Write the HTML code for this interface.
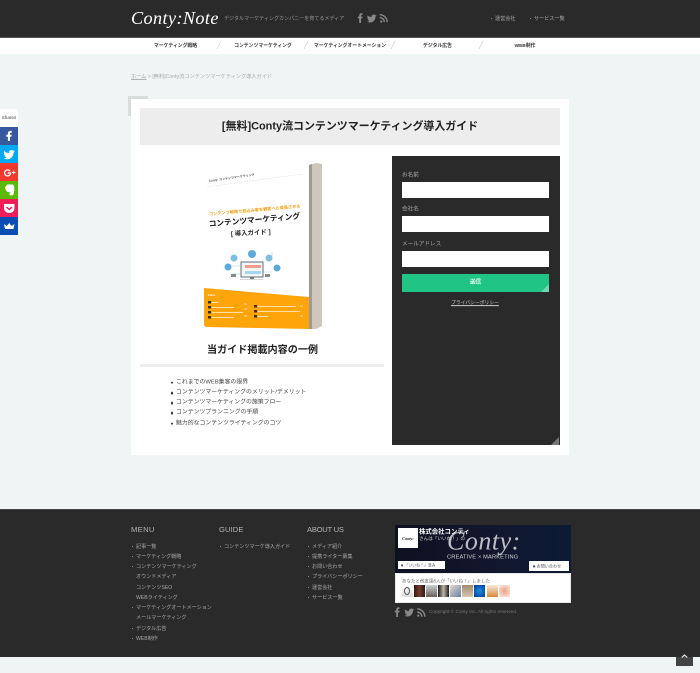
<!DOCTYPE html>
<html lang="ja"><head><meta charset="utf-8"><title>Conty:Note</title>
<style>
html,body{margin:0;padding:0}
body{width:700px;height:673px;position:relative;overflow:hidden;background:#eff4f5;font-family:"Liberation Sans","Noto Sans CJK JP",sans-serif;color:#444}
#w{position:absolute;left:0;top:0;width:700px;height:673px;overflow:hidden;filter:blur(.3px)}
.a{position:absolute;white-space:nowrap}
.t{position:absolute;white-space:nowrap;line-height:1;transform:translateY(calc(-50% + 1.5px))}
.c{position:absolute;white-space:nowrap;line-height:1;transform:translate(-50%,calc(-50% + 1.5px));font-weight:700;color:#333;font-size:4.85px}
.f{position:absolute;white-space:nowrap;line-height:1;transform:translateY(calc(-50% + 1.5px));font-size:5.1px;color:#aaa}
.h{position:absolute;line-height:1;font-size:7.6px;color:#b5b5b5;transform:translateY(-50%);white-space:nowrap}
.d{position:absolute;width:1.4px;height:1.4px;border-radius:50%;background:#aaa}
.b{position:absolute;left:0;width:18px;height:18px}
.b svg{position:absolute;left:0;top:0}
.li{position:absolute;left:176px;font-size:5.88px;line-height:1;color:#444;white-space:nowrap;transform:translateY(calc(-50% + 1.5px))}
.li:before{content:"";position:absolute;left:-5px;top:1.2px;width:2.4px;height:2.4px;border-radius:50%;background:#333}
.lb{position:absolute;left:402px;font-size:5.6px;line-height:1;color:#aaa;transform:translateY(calc(-50% + 1.5px));white-space:nowrap}
.in{position:absolute;left:402px;width:147px;height:16px;background:#fff}
.av{position:absolute;top:585px;width:11px;height:12px}
</style></head><body><div id="w">

<!-- header -->
<div class="a" style="left:0;top:0;width:700px;height:37px;background:#2a2a2a;border-bottom:1px solid #555"></div>
<div class="t" style="left:131px;top:17px;font:italic 400 18.2px 'Liberation Serif','Noto Sans CJK JP',serif;color:#fff;letter-spacing:.4px">Conty:Note</div>
<div class="t" style="left:224px;top:18px;font-size:5.05px;color:#999">デジタルマーケティングカンパニーを育てるメディア</div>
<svg class="a" style="left:355px;top:12px" width="35" height="12" viewBox="0 0 35 12" fill="#888">
<path d="M4.2 11V6.4H2.8V4.6h1.4V3.4C4.2 2 5 1.2 6.3 1.2h1.2V3H6.6c-.5 0-.6.2-.6.6v1h1.5l-.2 1.8H6V11z"/>
<path d="M12 3.4c1.6 1 3 1.6 4.6 1.7-.3-1.5.8-2.6 2-2.6.6 0 1.1.2 1.5.6.5-.1.9-.3 1.3-.5-.2.5-.5.9-1 1.2.4 0 .8-.2 1.2-.3-.3.4-.7.8-1.1 1.1 0 3.2-2.3 5.9-5.5 5.9-1.2 0-2.2-.3-3-.9 1 .1 1.9-.2 2.6-.8-.8 0-1.4-.5-1.7-1.2h.8c-.8-.3-1.4-1-1.4-1.9.3.1.5.2.8.2-.8-.6-1-1.6-.6-2.5z"/>
<circle cx="26.3" cy="9.6" r="1.1"/>
<path d="M25.2 5.4v1.4c2.2 0 4 1.8 4 4h1.4c0-3-2.4-5.4-5.4-5.4zM25.2 2.4v1.4c3.9 0 7 3.1 7 7h1.4c0-4.6-3.8-8.4-8.4-8.4z" transform="translate(0 -.4) scale(.98)"/>
</svg>
<div class="d" style="left:491px;top:18px"></div>
<div class="t" style="left:495px;top:18px;font-size:5.1px;color:#aaa">運営会社</div>
<div class="d" style="left:530px;top:18px"></div>
<div class="t" style="left:534px;top:18px;font-size:5.1px;color:#aaa">サービス一覧</div>

<!-- nav -->
<div class="a" style="left:0;top:38px;width:700px;height:15.5px;background:#fff"></div>
<div class="c" style="left:175.5px;top:45.5px">マーケティング戦略</div>
<div class="c" style="left:263px;top:45.5px">コンテンツマーケティング</div>
<div class="c" style="left:350px;top:45.5px">マーケティングオートメーション</div>
<div class="c" style="left:437.5px;top:45.5px">デジタル広告</div>
<div class="c" style="left:525px;top:45.5px">WEB制作</div>
<svg class="a" style="left:0;top:38px" width="700" height="16" fill="none" stroke="#ccc" stroke-width=".6">
<path d="M217 11 221 3M304 11 308 3M391 11 395 3M479 11 483 3"/>
</svg>

<!-- breadcrumb -->
<div class="t" style="left:131px;top:75.5px;font-size:5.2px;color:#aaa"><span style="text-decoration:underline">ホーム</span> &gt; [無料]Conty流コンテンツマーケティング導入ガイド</div>

<!-- card -->
<div class="a" style="left:128px;top:96px;width:20px;height:20px;background:#d9dcdd"></div>
<div class="a" style="left:131px;top:99px;width:438px;height:356px;background:#fff"></div>
<div class="a" style="left:140px;top:108px;width:420px;height:37px;background:#ededed"></div>
<div class="t" style="left:350px;top:126.5px;transform:translate(-50%,-50%);font-size:10.95px;font-weight:700;color:#222">[無料]Conty流コンテンツマーケティング導入ガイド</div>

<!-- book -->
<svg class="a" style="left:195px;top:155px" width="135" height="185" viewBox="195 155 135 185">
<polygon points="309,165 316,163 322,164 322,326 316,329 309,329" fill="#cfc7bc"/>
<polygon points="309,165 312,164 312,329 309,329" fill="#9f9a93"/>
<polygon points="204,178 309,163 309,329 204,327" fill="#fff"/>
<path d="M204 288 309 297V329L207 327Q204 327 204 324Z" fill="#fea50b"/>
<text transform="translate(209,182) rotate(-8)" font-size="3" fill="#555" font-weight="700">Conty:  コンテンツマーケティング</text>
<path d="M207 187 302 174" stroke="#e5e5e5" stroke-width=".5"/>
<text transform="translate(209,215.5) rotate(-5)" font-size="4.2" fill="#f59e13" font-weight="700">コンテンツ戦略で見込み客を顧客へと成長させる</text>
<text transform="translate(209,226.5) rotate(-5)" font-size="7.7" fill="#111" font-weight="700">コンテンツマーケティング</text>
<text transform="translate(231,236) rotate(-3)" font-size="6.4" fill="#222" font-weight="700">[ 導入ガイド ]</text>
<g fill="none" stroke="#9cc9e6" stroke-width=".5"><path d="M227 266H240M252 258V252M268 258H272V252M262 272H272M240 274H232"/></g>
<circle cx="252" cy="254" r="4" fill="#5da9dc"/><circle cx="269" cy="258" r="3.5" fill="#7fbfe5"/><circle cx="234" cy="258" r="3.5" fill="#7fbfe5"/><circle cx="228" cy="267" r="3.5" fill="#5da9dc"/><circle cx="277" cy="268" r="3.5" fill="#5da9dc"/>
<rect x="241" y="262" width="22" height="15" fill="#f5f5f5" stroke="#4d6170" stroke-width=".9"/>
<rect x="245" y="265" width="16" height="3" fill="#f49a8e"/><rect x="245" y="271" width="16" height="3" fill="#a5d6ee"/>
<rect x="250" y="277" width="4" height="2" fill="#777"/><rect x="240" y="279" width="23" height=".8" fill="#ccc"/>
<rect x="231" y="274" width="5" height="3" fill="#888"/><rect x="265" y="274" width="5" height="3" fill="#888"/>
<text x="208" y="296" font-size="2.8" fill="#fff" font-weight="700">Index</text>
<g fill="#333"><rect x="208" y="301" width="3" height="2.5"/><rect x="208" y="306" width="3" height="2.5"/><rect x="208" y="311" width="3" height="2.5"/><rect x="208" y="316" width="3" height="2.5"/><rect x="254" y="305" width="3" height="2.5"/><rect x="254" y="310" width="3" height="2.5"/><rect x="254" y="315" width="3" height="2.5"/></g>
<g stroke="#fff3d8" stroke-width=".8" fill="none"><path d="M212 302.5H218M212 307.5H234M212 312.5H243M212 317.5H234M258 306.5H296M258 311.5H300M258 316.5H268M244 304H247M244 309H247M244 316H247M300 306H303M300 316H303"/></g>
</svg>

<div class="t" style="left:262.5px;top:351px;transform:translate(-50%,-50%);font-size:10.1px;font-weight:700;color:#222">当ガイド掲載内容の一例</div>
<div class="a" style="left:140px;top:364px;width:244px;height:2.5px;background:#eeeeee"></div>
<div class="li" style="top:381.7px">これまでのWEB集客の限界</div>
<div class="li" style="top:392px">コンテンツマーケティングのメリット/デメリット</div>
<div class="li" style="top:402.2px">コンテンツマーケティングの施策フロー</div>
<div class="li" style="top:412.2px">コンテンツプランニングの手順</div>
<div class="li" style="top:422.5px">魅力的なコンテンツライティングのコツ</div>

<!-- form -->
<div class="a" style="left:392px;top:156px;width:167.5px;height:289px;background:#2a2a2a"></div>
<div class="a" style="left:551px;top:437px;width:0;height:0;border-style:solid;border-width:0 0 8px 8px;border-color:transparent transparent #777 transparent"></div>
<div class="lb" style="top:175px">お名前</div>
<div class="in" style="top:182px"></div>
<div class="lb" style="top:209.3px">会社名</div>
<div class="in" style="top:216px"></div>
<div class="lb" style="top:243.5px">メールアドレス</div>
<div class="in" style="top:250.5px"></div>
<div class="a" style="left:402px;top:274px;width:147px;height:17.5px;background:#20c586"></div>
<div class="a" style="left:541px;top:283.5px;width:0;height:0;border-style:solid;border-width:0 0 8px 8px;border-color:transparent transparent #6ed9b0 transparent"></div>
<div class="c" style="left:475.5px;top:282px;color:#fff;font-size:5.6px">送信</div>
<div class="c" style="left:475px;top:303px;color:#ccc;font-size:4.8px;font-weight:400;text-decoration:underline">プライバシーポリシー</div>

<!-- share -->
<div class="a" style="left:0;top:109px;width:18px;height:18px;background:#fff"></div>
<div class="c" style="left:9px;top:117px;font-size:4.6px;font-weight:400;color:#444">Shares</div>
<div class="b" style="top:127px;background:#36589f"><svg width="18" height="18" fill="#fff"><path d="M7.9 14V9.7H6.3V7.7h1.6V6.4C7.9 4.7 8.9 3.9 10.3 3.9h1.4V5.9h-1c-.6 0-.8.3-.8.8v1h1.8l-.3 2H9.9V14z"/></svg></div>
<div class="b" style="top:145px;background:#03a9f0"><svg width="18" height="18" fill="#fff"><path d="M3.4 5.4c1.7 1.7 3.5 2.6 5.5 2.7-.3-1.7.9-3 2.4-3 .7 0 1.3.3 1.8.7.5-.1 1.1-.3 1.5-.6-.2.6-.6 1.1-1.1 1.4.5-.1 1-.2 1.4-.4-.3.5-.8.9-1.3 1.3 0 3.7-2.7 6.8-6.5 6.8-1.3 0-2.6-.4-3.6-1 1.2.1 2.3-.2 3.1-.9-1 0-1.7-.6-2-1.4h1c-1-.3-1.7-1.2-1.7-2.2.3.1.6.2 1 .3-1-.7-1.3-1.9-.8-2.9z"/></svg></div>
<div class="b" style="top:163px;background:#f13a2e"><svg width="18" height="18" fill="none" stroke="#fff" stroke-width="1.3"><path d="M10 8.1A3 3 0 1 0 10.6 10H7.7"/><path d="M12 9.5h3.4M13.7 7.8v3.4" stroke-width=".9"/></svg></div>
<div class="b" style="top:181px;background:#5ab90a"><svg width="18" height="18"><path d="M5 6 7.5 3.5h4.5c1.5 0 2 1 2.2 3 .3 3-.3 6.5-1.2 7.5-.8.6-3 .6-3.5-.4-.4-1 .4-2 1.8-1.7-1.2-.5-2.5-.7-3.3-.9C6.5 10.5 5.5 9.5 5 6z" fill="#fff"/></svg></div>
<div class="b" style="top:199px;background:#ef1e58"><svg width="18" height="18"><path d="M4 5h10.5v4c0 3-2.3 5-5.200 5S4 12 4 9z" fill="#fff"/><path d="M6.500 8 9.300 10.500 12 8" fill="none" stroke="#ef1e58" stroke-width="1.500"/></svg></div>
<div class="b" style="top:217px;background:#0a4db3"><svg width="18" height="18" fill="#fff"><path d="M4 7 6.700 9 9.200 6l2.400 3L14.500 7 13.500 12H5z"/></svg></div>

<!-- footer -->
<div class="a" style="left:0;top:509px;width:700px;height:148px;background:#2a2a2a;border-top:1px solid #444;box-sizing:border-box"></div>
<div class="h" style="left:131px;top:529.5px;letter-spacing:.35px">MENU</div>
<div class="h" style="left:219px;top:529.5px;letter-spacing:.1px">GUIDE</div>
<div class="h" style="left:307px;top:529.5px;letter-spacing:-.25px">ABOUT US</div>

<div class="d" style="left:131.5px;top:545.5px"></div><div class="f" style="left:136px;top:545.5px">記事一覧</div>
<div class="d" style="left:131.5px;top:555.5px"></div><div class="f" style="left:136px;top:555.8px">マーケティング戦略</div>
<div class="d" style="left:131.5px;top:566px"></div><div class="f" style="left:136px;top:566px">コンテンツマーケティング</div>
<div class="f" style="left:136px;top:576px">オウンドメディア</div>
<div class="f" style="left:136px;top:586.5px">コンテンツSEO</div>
<div class="f" style="left:136px;top:596.5px">WEBライティング</div>
<div class="d" style="left:131.5px;top:606.5px"></div><div class="f" style="left:136px;top:606.8px">マーケティングオートメーション</div>
<div class="f" style="left:136px;top:617px">メールマーケティング</div>
<div class="d" style="left:131.5px;top:627.5px"></div><div class="f" style="left:136px;top:627.5px">デジタル広告</div>
<div class="d" style="left:131.5px;top:637.5px"></div><div class="f" style="left:136px;top:637.5px">WEB制作</div>

<div class="d" style="left:219.5px;top:545.5px"></div><div class="f" style="left:224px;top:545.5px">コンテンツマーケ導入ガイド</div>

<div class="d" style="left:307.5px;top:545.5px"></div><div class="f" style="left:312px;top:545.5px">メディア紹介</div>
<div class="d" style="left:307.5px;top:555.5px"></div><div class="f" style="left:312px;top:555.8px">提携ライター募集</div>
<div class="d" style="left:307.5px;top:566px"></div><div class="f" style="left:312px;top:566px">お問い合わせ</div>
<div class="d" style="left:307.5px;top:576px"></div><div class="f" style="left:312px;top:576px">プライバシーポリシー</div>
<div class="d" style="left:307.5px;top:586.5px"></div><div class="f" style="left:312px;top:586.5px">運営会社</div>
<div class="d" style="left:307.5px;top:596.5px"></div><div class="f" style="left:312px;top:596.5px">サービス一覧</div>

<!-- fb widget -->
<div class="a" style="left:395px;top:525px;width:176px;height:48px;background:linear-gradient(90deg,#0e1120,#12162c 50%,#0b1a35)"></div>
<div class="a" style="left:398px;top:528px;width:20px;height:19.5px;background:#fff"></div>
<div class="c" style="left:408px;top:537px;font:italic 700 4.2px 'Liberation Serif',serif;color:#222">Conty:</div>
<div class="t" style="left:447px;top:540px;font:italic 400 26px 'Liberation Serif',serif;color:#bdbdc4;letter-spacing:.5px">Conty:</div>
<div class="t" style="left:419px;top:531px;font-size:6.4px;font-weight:700;color:#fff">株式会社コンティ</div>
<div class="t" style="left:419px;top:538px;font-size:4.6px;color:#ddd">さんは「いいね！」の</div>
<div class="t" style="left:447px;top:557px;font-size:5.7px;color:#d5d5d5;letter-spacing:.15px">CREATIVE × MARKETING</div>
<div class="a" style="left:398px;top:561px;width:47px;height:8px;background:#fff"></div>
<div class="t" style="left:401px;top:564px;font-size:3.9px;color:#555">■ 「いいね！」済み</div>
<div class="a" style="left:529px;top:561px;width:39.5px;height:10px;background:#fff"></div>
<div class="t" style="left:533px;top:565px;font-size:4.1px;color:#444">■ お問い合わせ</div>
<div class="a" style="left:395px;top:573px;width:176px;height:30px;background:#fff;box-shadow:inset 0 0 0 1px #e8e8e8"></div>
<div class="t" style="left:402px;top:580px;font-size:4.5px;color:#666">あなたと他友達8人が「いいね！」しました</div>
<div class="av" style="left:402px;background:linear-gradient(#fff,#dcdcdc)"></div>
<div class="a" style="left:404px;top:587px;width:6px;height:8px;border:1px solid #555;border-radius:50%;box-sizing:border-box"></div>
<div class="av" style="left:414px;background:linear-gradient(90deg,#2a1c18,#7c3a2a,#241a18)"></div>
<div class="av" style="left:426px;background:linear-gradient(#c9d1d8,#6b5e58)"></div>
<div class="av" style="left:438px;background:linear-gradient(90deg,#1d1d20,#bdb6a8,#1d1d20)"></div>
<div class="av" style="left:450px;background:linear-gradient(135deg,#e3ddd4,#6c7fa0)"></div>
<div class="av" style="left:462px;background:linear-gradient(#a38d72,#d7c5ac)"></div>
<div class="av" style="left:474px;background:radial-gradient(circle,#1b8fe8,#063b90)"></div>
<div class="av" style="left:486.5px;background:linear-gradient(#f4e9d8,#d88a3c)"></div>
<div class="av" style="left:499px;background:radial-gradient(circle,#f0a080,#f8ece6)"></div>

<svg class="a" style="left:394px;top:606px" width="34" height="12" viewBox="0 0 34 12" fill="#888">
<path d="M2.2 11V6.4H.8V4.6h1.4V3.4C2.2 2 3 1.2 4.3 1.2h1.2V3H4.6c-.5 0-.6.2-.6.6v1h1.5l-.2 1.8H4V11z"/>
<path d="M10.5 3.4c1.6 1 3 1.6 4.6 1.7-.3-1.5.8-2.6 2-2.6.6 0 1.1.2 1.5.6.5-.1.9-.3 1.3-.5-.2.5-.5.9-1 1.2.4 0 .8-.2 1.2-.3-.3.4-.7.8-1.1 1.1 0 3.2-2.3 5.9-5.5 5.9-1.2 0-2.2-.3-3-.9 1 .1 1.9-.2 2.6-.8-.8 0-1.4-.5-1.7-1.2h.8c-.8-.3-1.4-1-1.4-1.9.3.1.5.2.8.2-.8-.6-1-1.6-.6-2.5z"/>
<circle cx="24.3" cy="9.6" r="1.1"/>
<path d="M23.2 5.4v1.4c2.2 0 4 1.8 4 4h1.4c0-3-2.4-5.4-5.4-5.4zM23.2 2.2v1.4c3.9 0 7 3.3 7 7.2h1.4c0-4.7-3.7-8.6-8.4-8.6z"/>
</svg>
<div class="t" style="left:429px;top:611.5px;font-size:4.75px;color:#777">Copyright © Conty Inc. All rights reserved.</div>

<!-- back to top -->
<div class="a" style="left:676px;top:657px;width:17px;height:9px;background:#444"></div>
<svg class="a" style="left:676px;top:650px" width="17" height="12" fill="none" stroke="#ddd" stroke-width="1.2"><path d="M5.8 7.5 8.5 5l2.7 2.5"/></svg>
</div></body></html>
